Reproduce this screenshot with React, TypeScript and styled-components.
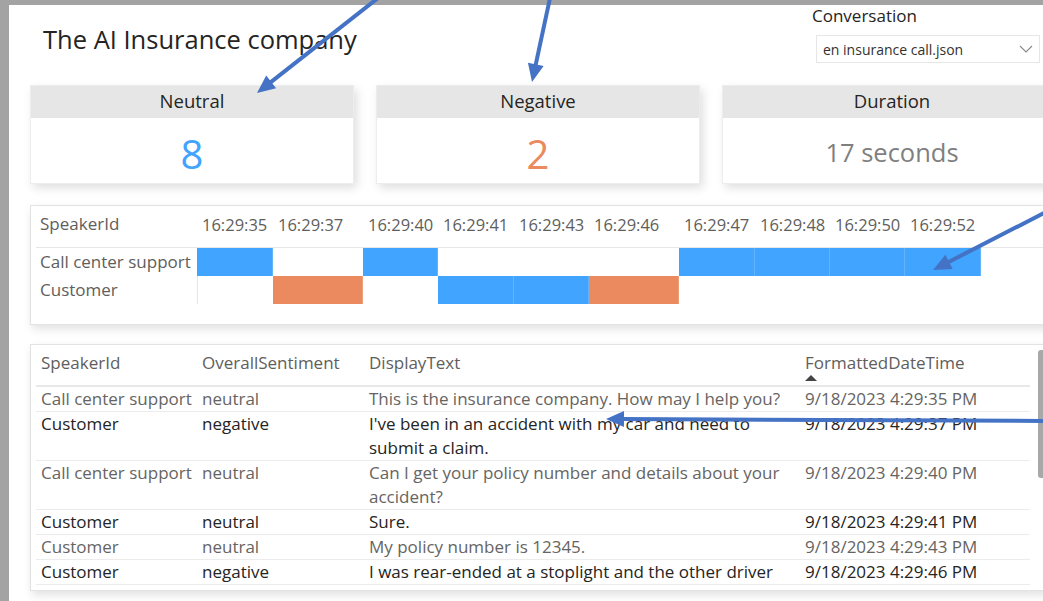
import React from "react";
import styled, { createGlobalStyle } from "styled-components";

const BLUE = "#41a4ff";
const ORANGE = "#eb8a5e";
const ARROW = "#4472c4";

const GlobalStyle = createGlobalStyle`
  html, body {
    margin: 0;
    padding: 0;
    background: #a3a3a3;
    overflow: hidden;
  }
  body {
    font-family: "Open Sans", "Noto Sans", "Liberation Sans", sans-serif;
    color: #252423;
  }
`;

const Page = styled.div`
  position: relative;
  width: 1043px;
  height: 601px;
  overflow: hidden;
  padding: 5px 0 0 9px;
  box-sizing: border-box;
`;

const Canvas = styled.div`
  width: 1120px;
  height: 100%;
  background: #fff;
  padding-left: 21px;
  box-sizing: border-box;
`;

const TopBar = styled.div`
  display: grid;
  grid-template-columns: 782px 1fr;
  height: 80px;
`;

const Title = styled.h1`
  margin: 0;
  padding: 17px 0 0 13px;
  font-size: 25.5px;
  line-height: 34px;
  font-weight: 400;
  color: #252423;
`;

const Slicer = styled.div`
  display: flex;
  flex-direction: column;
  padding-top: 0;
`;

const SlicerLabel = styled.div`
  font-size: 17px;
  line-height: 22px;
  color: #252423;
`;

const Dropdown = styled.div`
  margin: 8px 0 0 4px;
  width: 210px;
  height: 26px;
  border: 1px solid #e6e6e6;
  display: flex;
  align-items: center;
  justify-content: space-between;
  padding: 0 6px;
  box-sizing: content-box;
  font-size: 14px;
  font-weight: 500;
  color: #323130;
`;

const CardRow = styled.div`
  display: grid;
  grid-template-columns: 324px 324px 340px;
  column-gap: 22px;
`;

const Card = styled.div`
  height: 99px;
  display: flex;
  flex-direction: column;
  border: 1px solid #ededed;
  box-sizing: border-box;
  box-shadow: 3px 4px 9px rgba(0, 0, 0, 0.13);
`;

const CardHeader = styled.div`
  height: 32px;
  background: #e6e6e6;
  font-size: 18.5px;
  line-height: 29px;
  text-align: center;
  color: #252423;
`;

const CardValue = styled.div<{ $color: string; $size: number; $shift: number }>`
  flex: 1;
  display: flex;
  align-items: center;
  justify-content: center;
  padding-top: ${(p) => p.$shift}px;
  font-size: ${(p) => p.$size}px;
  color: ${(p) => p.$color};
`;

const Panel = styled.div<{ $top: number; $height: number }>`
  margin-top: ${(p) => p.$top}px;
  height: ${(p) => p.$height}px;
  width: 1090px;
  border: 1px solid #e3e3e3;
  box-sizing: border-box;
  background: #fff;
  box-shadow: 2px 4px 9px rgba(0, 0, 0, 0.12);
  padding-left: 5px;
`;

const timeCols = "161px 76px 90px 75px 76px 75px 90px 76px 75px 75px 76px 1fr";

const TimeGrid = styled.div<{ $header?: boolean }>`
  display: grid;
  grid-template-columns: ${timeCols};
  height: ${(p) => (p.$header ? 40 : 28)}px;
  align-items: ${(p) => (p.$header ? "center" : "stretch")};
  border-bottom: ${(p) => (p.$header ? "1px solid #e6e6e6" : "none")};
  padding-bottom: ${(p) => (p.$header ? 3 : 0)}px;
  box-sizing: ${(p) => (p.$header ? "content-box" : "border-box")};
  margin-top: ${(p) => (p.$header ? -2 : 0)}px;
  font-size: 17px;
  color: #605e5c;
`;

const TimeLabel = styled.div`
  padding-left: 5px;
  font-size: 16.5px;
  white-space: nowrap;
`;

const SpeakerLabel = styled.div`
  padding-left: 4px;
  line-height: 28px;
  white-space: nowrap;
`;

const Cell = styled.div<{ $fill?: string; $edge?: boolean }>`
  background: ${(p) => p.$fill ?? "transparent"};
  box-shadow: ${(p) =>
    p.$fill ? "inset -1px 0 0 rgba(255, 255, 255, 0.18)" : "none"};
  border-left: ${(p) => (p.$edge ? "1px solid #e6e6e6" : "none")};
`;

const TableWrap = styled.div`
  display: flex;
  height: 100%;
`;

const Table = styled.div`
  width: 994px;
  display: flex;
  flex-direction: column;
  overflow: hidden;
`;

const tableCols = "161px 167px 436px 230px";

const HeadRow = styled.div`
  display: grid;
  grid-template-columns: ${tableCols};
  height: 40px;
  border-bottom: 2px solid #e8e8e8;
  font-size: 17px;
  color: #605e5c;
`;

const HeadCell = styled.div`
  padding: 6px 5px 0;
  line-height: 24px;
  white-space: nowrap;
`;

const SortCaret = styled.div`
  width: 0;
  height: 0;
  border-left: 6px solid transparent;
  border-right: 6px solid transparent;
  border-bottom: 6px solid #444;
`;

const BodyRow = styled.div<{ $dim: boolean }>`
  display: grid;
  grid-template-columns: ${tableCols};
  border-bottom: 1px solid #ececec;
  font-size: 17px;
  line-height: 24px;
  color: ${(p) => (p.$dim ? "#666462" : "#252423")};
`;

const BodyCell = styled.div`
  padding: 0 5px;
  white-space: normal;
`;

const ScrollThumb = styled.div`
  margin: 5px 0 0 8px;
  width: 7px;
  height: 128px;
  border-radius: 3px;
  background: #a8a8a8;
`;

const Overlay = styled.svg`
  position: absolute;
  left: 0;
  top: 0;
  pointer-events: none;
`;

type Seg = string | null;

const times: string[] = [
  "16:29:35",
  "16:29:37",
  "16:29:40",
  "16:29:41",
  "16:29:43",
  "16:29:46",
  "16:29:47",
  "16:29:48",
  "16:29:50",
  "16:29:52",
];

const lanes: { speaker: string; cells: Seg[] }[] = [
  {
    speaker: "Call center support",
    cells: [BLUE, null, BLUE, null, null, null, BLUE, BLUE, BLUE, BLUE],
  },
  {
    speaker: "Customer",
    cells: [null, ORANGE, null, BLUE, BLUE, ORANGE, null, null, null, null],
  },
];

const rows = [
  {
    speaker: "Call center support",
    sentiment: "neutral",
    text: "This is the insurance company. How may I help you?",
    time: "9/18/2023 4:29:35 PM",
  },
  {
    speaker: "Customer",
    sentiment: "negative",
    text: "I've been in an accident with my car and need to submit a claim.",
    time: "9/18/2023 4:29:37 PM",
  },
  {
    speaker: "Call center support",
    sentiment: "neutral",
    text: "Can I get your policy number and details about your accident?",
    time: "9/18/2023 4:29:40 PM",
  },
  {
    speaker: "Customer",
    sentiment: "neutral",
    text: "Sure.",
    time: "9/18/2023 4:29:41 PM",
  },
  {
    speaker: "Customer",
    sentiment: "neutral",
    text: "My policy number is 12345.",
    time: "9/18/2023 4:29:43 PM",
  },
  {
    speaker: "Customer",
    sentiment: "negative",
    text: "I was rear-ended at a stoplight and the other driver",
    time: "9/18/2023 4:29:46 PM",
  },
];

const Arrow = ({ x1, y1, x2, y2 }: { x1: number; y1: number; x2: number; y2: number }) => {
  const dx = x2 - x1;
  const dy = y2 - y1;
  const len = Math.hypot(dx, dy);
  const ux = dx / len;
  const uy = dy / len;
  const head = 18;
  const half = 8;
  const bx = x2 - ux * head;
  const by = y2 - uy * head;
  const pts = [
    `${x2},${y2}`,
    `${bx - uy * half},${by + ux * half}`,
    `${bx + uy * half},${by - ux * half}`,
  ].join(" ");
  return (
    <g>
      <line x1={x1} y1={y1} x2={bx + ux * 2} y2={by + uy * 2} stroke={ARROW} strokeWidth={4} />
      <polygon points={pts} fill={ARROW} />
    </g>
  );
};

const Chevron = () => (
  <svg width="14" height="8" viewBox="0 0 14 8">
    <path d="M1 1l6 6 6-6" fill="none" stroke="#8a8886" strokeWidth="1.1" />
  </svg>
);

export default function App() {
  return (
    <>
      <GlobalStyle />
      <Page>
        <Canvas>
          <TopBar>
            <Title>The AI Insurance company</Title>
            <Slicer>
              <SlicerLabel>Conversation</SlicerLabel>
              <Dropdown>
                <span>en insurance call.json</span>
                <Chevron />
              </Dropdown>
            </Slicer>
          </TopBar>

          <CardRow>
            <Card>
              <CardHeader>Neutral</CardHeader>
              <CardValue $color={BLUE} $size={40} $shift={6}>8</CardValue>
            </Card>
            <Card>
              <CardHeader>Negative</CardHeader>
              <CardValue $color={ORANGE} $size={40} $shift={6}>2</CardValue>
            </Card>
            <Card>
              <CardHeader>Duration</CardHeader>
              <CardValue $color="#7f7f7f" $size={25.5} $shift={2}>17 seconds</CardValue>
            </Card>
          </CardRow>

          <Panel $top={21} $height={120}>
            <TimeGrid $header>
              <SpeakerLabel>SpeakerId</SpeakerLabel>
              {times.map((t) => (
                <TimeLabel key={t}>{t}</TimeLabel>
              ))}
            </TimeGrid>
            {lanes.map((lane) => (
              <TimeGrid key={lane.speaker}>
                <SpeakerLabel>{lane.speaker}</SpeakerLabel>
                {lane.cells.map((c, i) => (
                  <Cell key={i} $fill={c ?? undefined} $edge={i === 0 && !c} />
                ))}
              </TimeGrid>
            ))}
          </Panel>

          <Panel $top={19} $height={247}>
            <TableWrap>
              <Table>
                <HeadRow>
                  <HeadCell>SpeakerId</HeadCell>
                  <HeadCell>OverallSentiment</HeadCell>
                  <HeadCell>DisplayText</HeadCell>
                  <HeadCell>
                    FormattedDateTime
                    <SortCaret />
                  </HeadCell>
                </HeadRow>
                {rows.map((r, i) => (
                  <BodyRow key={r.time} $dim={i % 2 === 0}>
                    <BodyCell>{r.speaker}</BodyCell>
                    <BodyCell>{r.sentiment}</BodyCell>
                    <BodyCell>{r.text}</BodyCell>
                    <BodyCell>{r.time}</BodyCell>
                  </BodyRow>
                ))}
              </Table>
              <ScrollThumb />
            </TableWrap>
          </Panel>
        </Canvas>

        <Overlay width={1043} height={601}>
          <Arrow x1={378} y1={-2} x2={257} y2={93} />
          <Arrow x1={550} y1={-2} x2={532} y2={82} />
          <Arrow x1={1046} y1={212} x2={933} y2={270} />
          <Arrow x1={1046} y1={421} x2={606} y2={419} />
        </Overlay>
      </Page>
    </>
  );
}
